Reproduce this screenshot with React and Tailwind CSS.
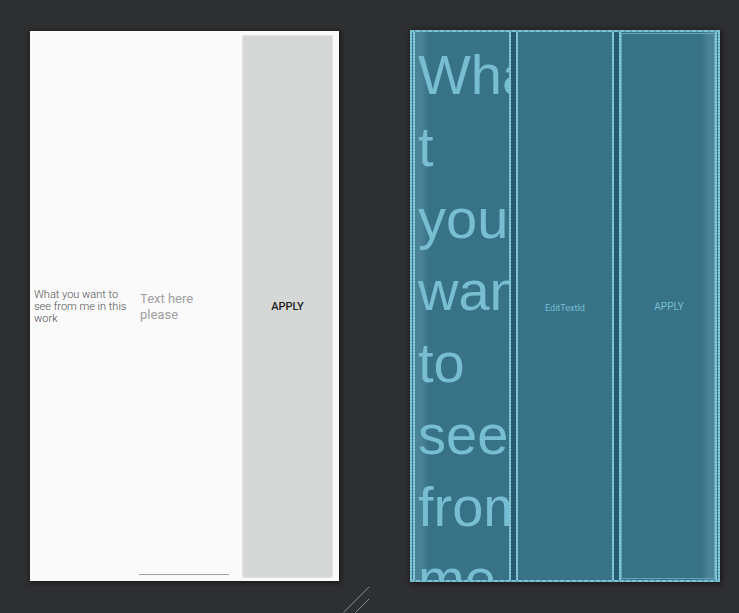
const lineV =
  "bg-[repeating-linear-gradient(180deg,#85cadb_0px,#85cadb_2px,#70b3c5_2px,#70b3c5_3px)]";
const lineH =
  "bg-[repeating-linear-gradient(90deg,#7cc1d3_0px,#7cc1d3_4px,#62a5b8_4px,#62a5b8_6px)]";

function Rule() {
  return <div aria-hidden="true" className={`w-[2px] shrink-0 ${lineV}`} />;
}

function DesignPreview() {
  return (
    <section
      aria-label="Design"
      className="my-px grid grid-cols-3 bg-[#fafafa] shadow-[1px_1px_5px_1px_rgba(0,0,0,0.45)]"
    >
      <div className="flex items-center pl-1 pt-[2px]">
        <label htmlFor="answer" className="text-[11px] font-light leading-3 text-[#505050]">
          What you want to see from me in this work
        </label>
      </div>
      <div className="mb-[6px] ml-[6px] mr-[7px] flex items-center border-b border-[#a0a0a0] pt-2">
        <textarea
          id="answer"
          rows={2}
          placeholder="Text here please"
          className="block w-full resize-none overflow-hidden bg-transparent pl-px pr-4 text-[13px] leading-4 text-[#333333] outline-none placeholder:text-[#a0a0a0]"
        />
      </div>
      <button
        type="button"
        className="mb-1 ml-[7px] mr-[7px] mt-[5px] rounded-[1px] bg-[#d6d8d7] pt-[2px] text-[11px] font-medium text-[#202020] shadow-[0_0_1px_1px_rgba(0,0,0,0.1)]"
      >
        APPLY
      </button>
    </section>
  );
}

function Blueprint() {
  return (
    <section
      aria-label="Blueprint"
      className="flex flex-col overflow-hidden bg-[#265b6d] shadow-[1px_1px_5px_1px_rgba(0,0,0,0.45)]"
    >
      <div className={`h-[2px] shrink-0 ${lineH}`} />
      <div className="flex min-h-0 flex-1">
        <Rule />
        <div className="w-px bg-[#3a7387]" />
        <Rule />
        <div className="w-0 flex-1 overflow-hidden bg-[linear-gradient(90deg,#4a8296_0px,#4a8296_6px,#387286_14px)]">
          <p className="h-0 pl-[3px] pt-[7px] font-['Liberation_Sans',Arial,sans-serif] text-[56px] leading-[72px] text-[#77bed3]">
            Wha
            <br />t<br />
            you
            <br />
            want
            <br />
            to
            <br />
            see
            <br />
            from
            <br />
            me
          </p>
        </div>
        <Rule />
        <div className="w-[5px]" />
        <Rule />
        <div className="flex w-0 flex-1 items-center justify-center bg-[#387286] pt-[5px] text-[9px] text-[#77bed3]">
          EditTextId
        </div>
        <Rule />
        <div className="w-[5px]" />
        <Rule />
        <div className="w-0 flex-1 bg-[linear-gradient(270deg,#4a8296_0px,#4a8296_6px,#387286_14px)] pb-px pt-px">
          <div className="flex h-full items-center justify-center border border-[#62a5b8] pl-[2px] text-[10px] text-[#77bed3]">
            APPLY
          </div>
        </div>
        <Rule />
        <div className="w-px bg-[#3a7387]" />
        <Rule />
      </div>
      <div className={`h-[2px] shrink-0 ${lineH}`} />
    </section>
  );
}

export default function App() {
  return (
    <main className="relative grid h-screen grid-cols-[309fr_310fr] gap-[71px] overflow-hidden bg-[#2e2f31] pb-[31px] pl-[30px] pr-[19px] pt-[30px] font-[Roboto,sans-serif]">
      <DesignPreview />
      <Blueprint />
      <svg
        aria-hidden="true"
        viewBox="0 0 27 27"
        className="absolute bottom-0 left-1/2 h-[27px] w-[27px] -translate-x-[27px]"
        fill="none"
        stroke="#858687"
        strokeWidth="1"
      >
        <path d="M0.5 26.5 26 1M12.5 26.5 26 13" />
      </svg>
    </main>
  );
}
